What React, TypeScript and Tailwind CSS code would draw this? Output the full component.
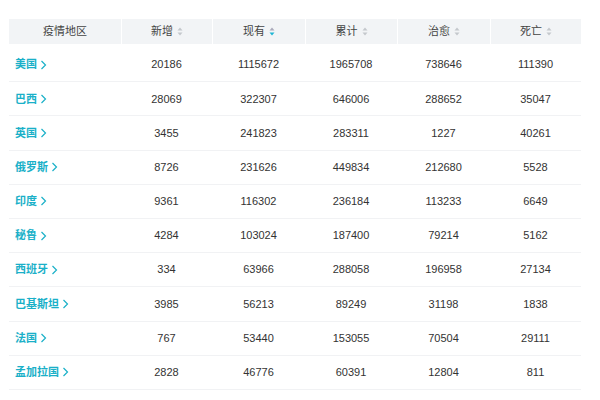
const rows: [string, ...number[]][] = [
  ["美国", 20186, 1115672, 1965708, 738646, 111390],
  ["巴西", 28069, 322307, 646006, 288652, 35047],
  ["英国", 3455, 241823, 283311, 1227, 40261],
  ["俄罗斯", 8726, 231626, 449834, 212680, 5528],
  ["印度", 9361, 116302, 236184, 113233, 6649],
  ["秘鲁", 4284, 103024, 187400, 79214, 5162],
  ["西班牙", 334, 63966, 288058, 196958, 27134],
  ["巴基斯坦", 3985, 56213, 89249, 31198, 1838],
  ["法国", 767, 53440, 153055, 70504, 29111],
  ["孟加拉国", 2828, 46776, 60391, 12804, 811],
];

const cols = ["w-[112px]", "w-[91px]", "w-[93px]", "w-[92px]", "w-[93px]", "w-[91px]"];
const heads = ["疫情地区", "新增", "现有", "累计", "治愈", "死亡"];

function SortIcon({ active }: { active?: boolean }) {
  return (
    <svg width="6" height="9" viewBox="0 0 6 9" className="ml-1">
      <path d="M3 0.5L5.5 3.5H0.5Z" fill={active ? "#aab" : "#c4c8cc"} />
      <path d="M3 8.5L0.5 5.5H5.5Z" fill={active ? "#1fb6d4" : "#c4c8cc"} />
    </svg>
  );
}

export default function App() {
  return (
    <div
      className="w-[600px] h-[400px] bg-white pt-[19px] pl-[9px]"
      style={{ fontFamily: '"Liberation Sans", "Noto Sans CJK SC", sans-serif' }}
    >
      <div className="w-[572px]">
        <div className="flex h-[25px] bg-[#f2f4f6] text-[11px] text-[#444]">
          {heads.map((h, i) => (
            <div
              key={h}
              className={`${cols[i]} flex items-center justify-center ${i > 0 ? "border-l border-white" : ""}`}
            >
              {h}
              {i > 0 && <SortIcon active={i === 2} />}
            </div>
          ))}
        </div>
        <div className="mt-[4px]">
          {rows.map(([name, ...nums]) => (
            <div key={name} className="flex h-[34.2px] items-center border-b border-[#f1f2f4] text-[11px] text-[#333]">
              <div className={`${cols[0]} pl-[6px] flex items-center text-[#1ab0c8] font-bold`}>
                {name}
                <svg width="7" height="10" viewBox="0 0 7 10" className="ml-[3px]">
                  <path d="M1.5 1L5.5 5L1.5 9" stroke="#1ab0c8" strokeWidth="1.2" fill="none" />
                </svg>
              </div>
              {nums.map((n, i) => (
                <div key={i} className={`${cols[i + 1]} text-center`}>
                  {n}
                </div>
              ))}
            </div>
          ))}
        </div>
      </div>
    </div>
  );
}
